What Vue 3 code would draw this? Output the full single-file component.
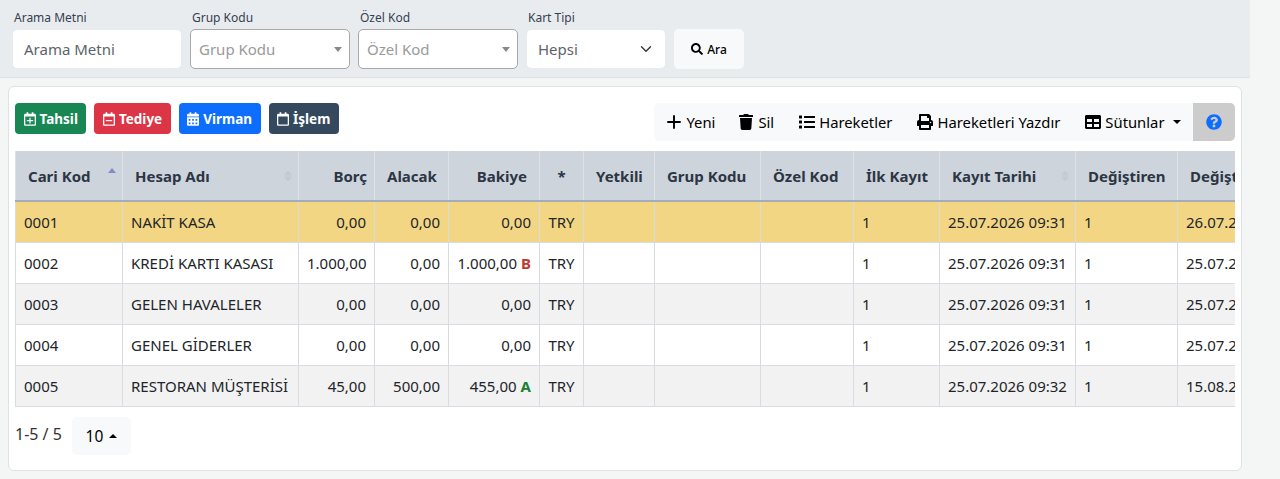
<script setup>
const columns = [
  { label: 'Cari Kod', width: 107, sort: 'asc' },
  { label: 'Hesap Adı', width: 176, sort: 'none' },
  { label: 'Borç', width: 76, align: 'right tight' },
  { label: 'Alacak', width: 74, align: 'right' },
  { label: 'Bakiye', width: 91, align: 'right' },
  { label: '*', width: 44, align: 'center' },
  { label: 'Yetkili', width: 71 },
  { label: 'Grup Kodu', width: 106 },
  { label: 'Özel Kod', width: 93 },
  { label: 'İlk Kayıt', width: 86 },
  { label: 'Kayıt Tarihi', width: 136, sort: 'none' },
  { label: 'Değiştiren', width: 102 },
  { label: 'Değiştirme Tarihi', width: 136 }
]
const rows = [
  { id: '0001', name: 'NAKİT KASA', borc: '0,00', alacak: '0,00', bakiye: '0,00', mark: '', cur: 'TRY', created: '25.07.2026 09:31', changed: '26.07.2026 10:12', active: true },
  { id: '0002', name: 'KREDİ KARTI KASASI', borc: '1.000,00', alacak: '0,00', bakiye: '1.000,00', mark: 'B', cur: 'TRY', created: '25.07.2026 09:31', changed: '25.07.2026 09:31' },
  { id: '0003', name: 'GELEN HAVALELER', borc: '0,00', alacak: '0,00', bakiye: '0,00', mark: '', cur: 'TRY', created: '25.07.2026 09:31', changed: '25.07.2026 09:31', striped: true },
  { id: '0004', name: 'GENEL GİDERLER', borc: '0,00', alacak: '0,00', bakiye: '0,00', mark: '', cur: 'TRY', created: '25.07.2026 09:31', changed: '25.07.2026 09:31' },
  { id: '0005', name: 'RESTORAN MÜŞTERİSİ', borc: '45,00', alacak: '500,00', bakiye: '455,00', mark: 'A', cur: 'TRY', created: '25.07.2026 09:32', changed: '15.08.2026 09:32', striped: true }
]
const calendarOutline = 'M400 64h-48V12c0-6.6-5.4-12-12-12h-40c-6.6 0-12 5.4-12 12v52H160V12c0-6.6-5.4-12-12-12h-40c-6.6 0-12 5.4-12 12v52H48C21.5 64 0 85.5 0 112v352c0 26.5 21.5 48 48 48h352c26.5 0 48-21.5 48-48V112c0-26.5-21.5-48-48-48zm-6 400H54c-3.3 0-6-2.7-6-6V160h352v298c0 3.3-2.7 6-6 6z'
</script>

<template>
  <div class="page">
    <form class="filters" @submit.prevent>
      <label class="field f-search">
        <span class="lbl">Arama Metni</span>
        <span class="control">Arama Metni</span>
      </label>
      <label class="field f-select">
        <span class="lbl">Grup Kodu</span>
        <span class="control outlined placeholder">Grup Kodu<i class="caret grey"></i></span>
      </label>
      <label class="field f-select">
        <span class="lbl">Özel Kod</span>
        <span class="control outlined placeholder">Özel Kod<i class="caret grey"></i></span>
      </label>
      <label class="field f-type">
        <span class="lbl">Kart Tipi</span>
        <span class="control">Hepsi
          <svg class="chev" viewBox="0 0 16 16"><path fill="none" stroke="#343a40" stroke-width="1.9" stroke-linecap="round" stroke-linejoin="round" d="M2 5l6 6 6-6"/></svg>
        </span>
      </label>
      <button class="search-btn" type="button">
        <svg class="ic13" viewBox="0 0 512 512"><path d="M505 442.7L405.3 343c-4.5-4.5-10.6-7-17-7H372c27.6-35.3 44-79.7 44-128C416 93.1 322.9 0 208 0S0 93.1 0 208s93.1 208 208 208c48.3 0 92.7-16.4 128-44v16.3c0 6.4 2.5 12.5 7 17l99.7 99.7c9.4 9.4 24.6 9.4 33.9 0l28.3-28.3c9.4-9.4 9.4-24.6.1-34zM208 336c-70.7 0-128-57.2-128-128 0-70.7 57.2-128 128-128 70.7 0 128 57.2 128 128 0 70.7-57.2 128-128 128z"/></svg>
        Ara
      </button>
    </form>

    <section class="card">
      <div class="toolbar">
        <div class="actions">
          <button class="act green" type="button">
            <svg class="cal" viewBox="0 0 448 512"><path :d="calendarOutline"/><path d="M104 296h240v44H104zM202 208h44v220h-44z"/></svg>Tahsil
          </button>
          <button class="act red" type="button">
            <svg class="cal" viewBox="0 0 448 512"><path :d="calendarOutline"/><path d="M104 296h240v44H104z"/></svg>Tediye
          </button>
          <button class="act blue" type="button">
            <svg class="cal" viewBox="0 0 448 512"><path d="M0 464c0 26.5 21.5 48 48 48h352c26.5 0 48-21.5 48-48V192H0v272zm320-196c0-6.6 5.4-12 12-12h40c6.6 0 12 5.4 12 12v40c0 6.6-5.4 12-12 12h-40c-6.6 0-12-5.4-12-12v-40zm0 128c0-6.6 5.4-12 12-12h40c6.6 0 12 5.4 12 12v40c0 6.6-5.4 12-12 12h-40c-6.6 0-12-5.4-12-12v-40zM192 268c0-6.6 5.4-12 12-12h40c6.6 0 12 5.4 12 12v40c0 6.6-5.4 12-12 12h-40c-6.6 0-12-5.4-12-12v-40zm0 128c0-6.6 5.4-12 12-12h40c6.6 0 12 5.4 12 12v40c0 6.6-5.4 12-12 12h-40c-6.6 0-12-5.4-12-12v-40zM64 268c0-6.6 5.4-12 12-12h40c6.6 0 12 5.4 12 12v40c0 6.6-5.4 12-12 12H76c-6.6 0-12-5.4-12-12v-40zm0 128c0-6.6 5.4-12 12-12h40c6.6 0 12 5.4 12 12v40c0 6.6-5.4 12-12 12H76c-6.6 0-12-5.4-12-12v-40zM400 64h-48V16c0-8.8-7.2-16-16-16h-32c-8.8 0-16 7.2-16 16v48H160V16c0-8.8-7.2-16-16-16h-32c-8.8 0-16 7.2-16 16v48H48C21.5 64 0 85.5 0 112v48h448v-48c0-26.5-21.5-48-48-48z"/></svg>Virman
          </button>
          <button class="act navy" type="button">
            <svg class="cal" viewBox="0 0 448 512"><path :d="calendarOutline"/></svg>İşlem
          </button>
        </div>
        <div class="tools">
          <button class="tool first" type="button">
            <svg class="plus" viewBox="0 0 16 16"><path fill="none" stroke="#000" stroke-width="1.9" stroke-linecap="round" d="M8 2v12M2 8h12"/></svg>Yeni
          </button>
          <button class="tool" type="button">
            <svg class="ic16" viewBox="0 0 448 512"><path d="M432 32H312l-9.4-18.7A24 24 0 0 0 281.1 0H166.8a23.72 23.72 0 0 0-21.4 13.3L136 32H16A16 16 0 0 0 0 48v32a16 16 0 0 0 16 16h416a16 16 0 0 0 16-16V48a16 16 0 0 0-16-16zM53.2 467a48 48 0 0 0 47.9 45h245.8a48 48 0 0 0 47.9-45L416 128H32z"/></svg>Sil
          </button>
          <button class="tool" type="button">
            <svg class="ic16" viewBox="0 0 512 512"><path d="M80 368H16a16 16 0 0 0-16 16v64a16 16 0 0 0 16 16h64a16 16 0 0 0 16-16v-64a16 16 0 0 0-16-16zm0-320H16A16 16 0 0 0 0 64v64a16 16 0 0 0 16 16h64a16 16 0 0 0 16-16V64a16 16 0 0 0-16-16zm0 160H16a16 16 0 0 0-16 16v64a16 16 0 0 0 16 16h64a16 16 0 0 0 16-16v-64a16 16 0 0 0-16-16zm416 176H176a16 16 0 0 0-16 16v32a16 16 0 0 0 16 16h320a16 16 0 0 0 16-16v-32a16 16 0 0 0-16-16zm0-320H176a16 16 0 0 0-16 16v32a16 16 0 0 0 16 16h320a16 16 0 0 0 16-16V80a16 16 0 0 0-16-16zm0 160H176a16 16 0 0 0-16 16v32a16 16 0 0 0 16 16h320a16 16 0 0 0 16-16v-32a16 16 0 0 0-16-16z"/></svg>Hareketler
          </button>
          <button class="tool" type="button">
            <svg class="ic16" viewBox="0 0 512 512"><path d="M448 192V77.25c0-8.49-3.37-16.62-9.37-22.63L393.37 9.37c-6-6-14.14-9.37-22.63-9.37H96C78.33 0 64 14.33 64 32v160c-35.35 0-64 28.65-64 64v112c0 8.84 7.16 16 16 16h48v96c0 17.67 14.33 32 32 32h320c17.67 0 32-14.33 32-32v-96h48c8.84 0 16-7.16 16-16V256c0-35.35-28.65-64-64-64zm-64 256H128v-96h256v96zm0-224H128V64h192v48c0 8.84 7.16 16 16 16h48v96zm48 72c-13.25 0-24-10.75-24-24 0-13.26 10.75-24 24-24s24 10.74 24 24c0 13.25-10.75 24-24 24z"/></svg>Hareketleri Yazdır
          </button>
          <button class="tool" type="button">
            <svg class="ic16" viewBox="0 0 512 512"><path d="M464 32H48C21.49 32 0 53.49 0 80v352c0 26.51 21.49 48 48 48h416c26.51 0 48-21.49 48-48V80c0-26.51-21.49-48-48-48zM224 416H64v-96h160v96zm0-160H64v-96h160v96zm224 160H288v-96h160v96zm0-160H288v-96h160v96z"/></svg>Sütunlar<i class="caret dark"></i>
          </button>
          <button class="help" type="button">
            <svg class="ic16" viewBox="0 0 512 512"><path fill="#0d6efd" d="M504 256c0 136.997-111.043 248-248 248S8 392.997 8 256C8 119.083 119.043 8 256 8s248 111.083 248 248zM262.655 90c-54.497 0-89.255 22.957-116.549 63.758-3.536 5.286-2.353 12.415 2.715 16.258l34.699 26.31c5.205 3.947 12.621 3.008 16.665-2.122 17.864-22.658 30.113-35.797 57.303-35.797 20.429 0 45.698 13.148 45.698 32.958 0 14.976-12.363 22.667-32.534 33.976C247.128 238.528 216 254.941 216 296v4c0 6.627 5.373 12 12 12h56c6.627 0 12-5.373 12-12v-1.333c0-28.462 83.186-29.647 83.186-106.667 0-58.002-60.165-102-116.531-102zM256 338c-25.365 0-46 20.635-46 46 0 25.364 20.635 46 46 46s46-20.636 46-46c0-25.365-20.635-46-46-46z"/></svg>
          </button>
        </div>
      </div>

      <div class="table-wrap">
        <table>
          <colgroup>
            <col v-for="c in columns" :key="c.label" :style="{ width: c.width + 'px' }" />
          </colgroup>
          <thead>
            <tr>
              <th v-for="c in columns" :key="c.label" :class="c.align">
                {{ c.label }}
                <span v-if="c.sort" class="sort">
                  <i class="up" :class="{ on: c.sort === 'asc' }"></i>
                  <i v-if="c.sort === 'none'" class="down"></i>
                </span>
              </th>
            </tr>
          </thead>
          <tbody>
            <tr v-for="r in rows" :key="r.id" :class="{ active: r.active, striped: r.striped }">
              <td>{{ r.id }}</td>
              <td>{{ r.name }}</td>
              <td class="right">{{ r.borc }}</td>
              <td class="right">{{ r.alacak }}</td>
              <td class="right">{{ r.bakiye }}<b v-if="r.mark" class="mark" :class="r.mark === 'A' ? 'a' : 'b'">{{ r.mark }}</b></td>
              <td class="center">{{ r.cur }}</td>
              <td></td>
              <td></td>
              <td></td>
              <td>1</td>
              <td>{{ r.created }}</td>
              <td>1</td>
              <td>{{ r.changed }}</td>
            </tr>
          </tbody>
        </table>
      </div>

      <div class="pager">
        <span class="count">1-5 / 5</span>
        <button class="size" type="button">10<i class="caret up-caret"></i></button>
      </div>
    </section>
  </div>
</template>

<style>
html, body { margin: 0; background: #f4f5f5; }
</style>

<style scoped>
.page {
  height: 479px;
  box-sizing: border-box;
  background: #f4f5f5;
  font-family: "Noto Sans", "Open Sans", sans-serif;
  font-size: 15px;
  color: #212529;
  overflow: hidden;
}
button { font-family: inherit; border: 0; cursor: pointer; }
svg { fill: currentColor; flex: none; }

.filters {
  width: 1250px;
  height: 78px;
  box-sizing: border-box;
  background: #e9ecef;
  border-bottom: 1px solid #dee2e6;
  padding: 10px 0 0 12px;
  display: flex;
  align-items: flex-start;
  gap: 8px;
}
.field { display: flex; flex-direction: column; }
.f-search { width: 170px; }
.f-select { width: 160px; }
.f-type { width: 140px; }
.lbl {
  font-size: 12px;
  line-height: 16px;
  height: 19px;
  padding-left: 2px;
  color: #343f4f;
}
.control {
  height: 40px;
  box-sizing: border-box;
  background: #fff;
  background-clip: padding-box;
  border: 1px solid #e9ecef;
  border-radius: 5px;
  padding: 0 11px;
  display: flex;
  align-items: center;
  font-size: 15px;
  color: #5c636a;
  position: relative;
}
.outlined { border-color: #a9a9a9; padding: 0 8px; }
.placeholder { color: #9a9a9a; }
.caret {
  display: inline-block;
  width: 0;
  height: 0;
  border-left: 4px solid transparent;
  border-right: 4px solid transparent;
  border-top: 5px solid #000;
}
.caret.grey { border-top-color: #888; position: absolute; right: 7px; top: 17px; }
.caret.dark { margin-left: 4px; border-top-width: 4px; }
.chev { width: 12px; height: 12px; position: absolute; right: 13px; top: 13px; }
.search-btn {
  margin-top: 19px;
  width: 70px;
  height: 40px;
  background: #f8f9fa;
  border-radius: 5px;
  display: flex;
  align-items: center;
  justify-content: center;
  gap: 4px;
  font-size: 12px;
  font-weight: 500;
  color: #000;
}
.ic13 { width: 12px; height: 12px; }

.card {
  margin: 8px 0 0 8px;
  width: 1234px;
  height: 385px;
  box-sizing: border-box;
  background: #fff;
  border: 1px solid #dee2e6;
  border-radius: 6px;
  padding: 16px 6px 0 6px;
}
.toolbar { display: flex; justify-content: space-between; align-items: flex-start; height: 48px; }
.actions { display: flex; gap: 8px; }
.act {
  height: 31px;
  padding: 0 8.5px;
  border-radius: 4px;
  color: #fff;
  font-size: 13.5px;
  font-weight: 700;
  display: flex;
  align-items: center;
  gap: 4px;
}
.cal { width: 12px; height: 14px; }
.green { background: #198754; }
.red { background: #dc3545; }
.blue { background: #0d6efd; }
.navy { background: #34495e; }

.tools { display: flex; height: 38px; background: #f8f9fa; border-radius: 5px; overflow: hidden; }
.tool {
  background: transparent;
  padding: 0 12.5px;
  font-size: 14.8px;
  color: #000;
  display: flex;
  align-items: center;
  gap: 4px;
}
.tool.first { padding-right: 10.5px; padding-left: 12px; }
.ic16 { width: 16px; height: 16px; }
.plus { width: 16px; height: 16px; }
.help {
  width: 42px;
  background: #ccc;
  display: flex;
  align-items: center;
  justify-content: center;
  padding: 0;
}

.table-wrap { height: 257px; overflow: hidden; }
table {
  table-layout: fixed;
  width: 1298px;
  border-collapse: collapse;
}
th {
  height: 50px;
  box-sizing: border-box;
  background: #ced4dc;
  border: 1px solid #dee2e6;
  border-top: 0;
  border-bottom: 2px solid #a3adb9;
  padding: 0 12px;
  font-size: 15px;
  font-weight: 700;
  color: #2c3644;
  text-align: left;
  white-space: nowrap;
  position: relative;
}
th.right { text-align: right; }
th.tight { padding-right: 7px; }
th.center { text-align: center; }
td {
  height: 41px;
  box-sizing: border-box;
  border: 1px solid #d8dce2;
  padding: 0 8px;
  font-size: 15px;
  white-space: nowrap;
  overflow: hidden;
}
td.right { text-align: right; }
td.center { text-align: center; }
.active td { background: #f3d684; }
.striped td { background: #f2f2f2; }
.mark { margin-left: 4px; }
.mark.a { color: #198033; }
.mark.b { color: #c0392b; }
.sort {
  position: absolute;
  right: 6px;
  top: 50%;
  transform: translateY(-50%);
  display: flex;
  flex-direction: column;
  gap: 1px;
}
.sort i { display: block; width: 0; height: 0; border-left: 4px solid transparent; border-right: 4px solid transparent; }
.sort .up { border-bottom: 5px solid #c4cad3; }
.sort .up.on { border-bottom-color: #7f8cc9; margin-top: -8px; }
.sort .down { border-top: 5px solid #c4cad3; }

.pager { display: flex; align-items: center; gap: 10px; height: 38px; margin-top: 9px; }
.count { font-size: 16px; color: #333; margin-top: -4px; }
.size {
  width: 59px;
  height: 38px;
  background: #f8f9fa;
  border-radius: 5px;
  font-size: 15.5px;
  color: #000;
  display: flex;
  align-items: center;
  justify-content: center;
  gap: 6px;
}
.up-caret { border-top: 0; border-bottom: 4px solid #000; }
</style>
